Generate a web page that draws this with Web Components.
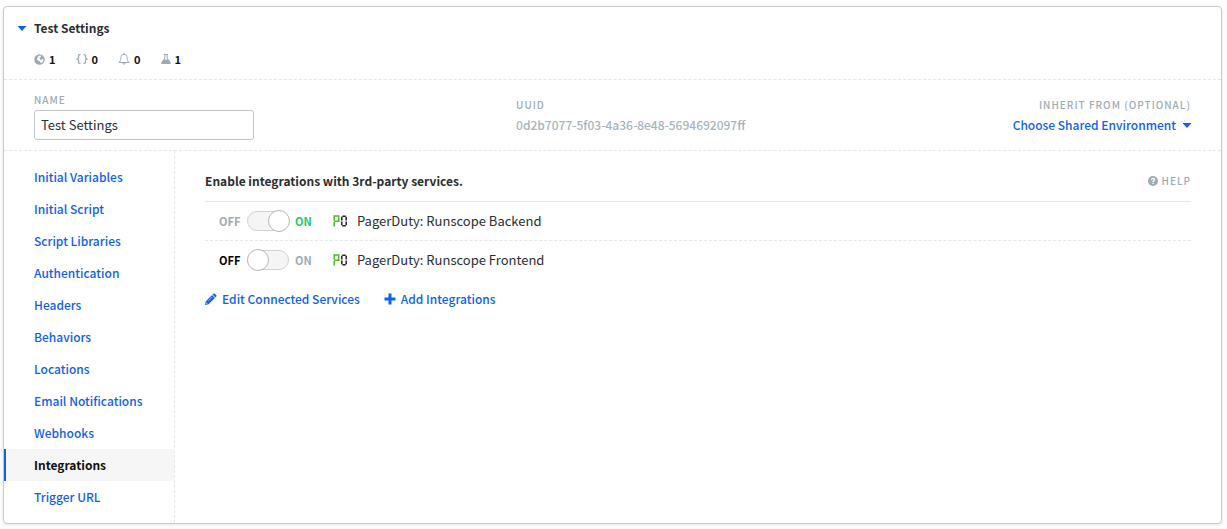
<!DOCTYPE html>
<html lang="en">
<head>
<meta charset="utf-8">
<title>Test Settings</title>
<style>
  body {
    margin: 0;
    padding: 6px 5px 5px 3px;
    background: #fff;
    color: #2b2d2f;
    font: 400 13px/20px "Noto Sans CJK SC", "Noto Sans", sans-serif;
    --blue: #0f62e6;
    --muted: #9dabb4;
    --line: #e4e6e7;
  }
</style>
</head>
<body>
<settings-card>
  <settings-header slot="header" heading="Test Settings">
    <count-badge icon="globe" label="Variables">1</count-badge>
    <count-badge icon="braces" label="Scripts">0</count-badge>
    <count-badge icon="bell" label="Notifications">0</count-badge>
    <count-badge icon="flask" label="Tests">1</count-badge>
  </settings-header>
  <environment-form slot="form" name="Test Settings" uuid="0d2b7077-5f03-4a36-8e48-5694692097ff"></environment-form>
  <side-nav slot="nav">
    <nav-item>Initial Variables</nav-item>
    <nav-item>Initial Script</nav-item>
    <nav-item>Script Libraries</nav-item>
    <nav-item>Authentication</nav-item>
    <nav-item>Headers</nav-item>
    <nav-item>Behaviors</nav-item>
    <nav-item>Locations</nav-item>
    <nav-item>Email Notifications</nav-item>
    <nav-item>Webhooks</nav-item>
    <nav-item current>Integrations</nav-item>
    <nav-item>Trigger URL</nav-item>
  </side-nav>
  <integrations-panel>
    <integration-row on>PagerDuty: Runscope Backend</integration-row>
    <integration-row>PagerDuty: Runscope Frontend</integration-row>
    <action-link slot="actions" icon="pencil">Edit Connected Services</action-link>
    <action-link slot="actions" icon="plus">Add Integrations</action-link>
  </integrations-panel>
</settings-card>

<script>
const ICONS = {
  globe: '<svg width="11" height="11" viewBox="0 0 20 20"><circle cx="10" cy="10" r="9.5" fill="currentColor"/><path fill="#fff" d="M10.500 2.500L13 3L12 5.500L9.500 7.500L11.500 9L14 8L16.500 9.500L17.500 11.500L15.500 15L12.500 17L11.500 14.500L9.500 12.500L7 11.500L5 9.500L6.500 7.500L7 5Z"/><path fill="currentColor" d="M13 4L16 4L18 8.500L15.500 8.500L12.500 11L10.500 10L12 7.500Z"/></svg>',
  braces: '<svg width="12" height="10" viewBox="0 0 12 10" fill="none" stroke="currentColor" stroke-width="1.3"><path d="M4.500 .7H3.500Q2.500 .7 2.500 1.700V3.800Q2.500 5 .5 5Q2.500 5 2.500 6.200V8.300Q2.500 9.300 3.500 9.300H4.500M7.500 .7H8.500Q9.500 .7 9.500 1.700V3.800Q9.500 5 11.500 5Q9.500 5 9.500 6.200V8.300Q9.500 9.300 8.500 9.300H7.500"/></svg>',
  bell: '<svg width="12" height="12" viewBox="0 0 12 12" fill="none" stroke="currentColor"><path d="M6 0V1.300M6 1.300C3.800 1.300 2.900 2.900 2.900 4.600C2.900 7.500 2 8.500 .8 9.500H11.200C10 8.500 9.100 7.500 9.100 4.600C9.100 2.900 8.200 1.300 6 1.300ZM4.800 9.700Q4.800 11.200 6 11.200T7.200 9.700"/></svg>',
  flask: '<svg width="10" height="10" viewBox="0 0 10 10"><path d="M2.800 .5H7.200M3.900 .5V4L.7 8.700Q.4 9.500 1.200 9.500H8.800Q9.600 9.500 9.300 8.700L6.100 4V.5" fill="none" stroke="currentColor"/><path d="M2.800 5.500H7.200L9.500 9V10H.5V9Z" fill="currentColor"/></svg>',
  help: '<svg width="10" height="10" viewBox="0 0 20 20"><circle cx="10" cy="10" r="10" fill="currentColor"/><path d="M6.800 7.500Q7.300 4.600 10.100 4.600Q13.100 4.800 13 7.300Q12.900 8.700 11.300 9.600Q10 10.400 10 12" fill="none" stroke="#fff" stroke-width="2.600"/><path d="M8.700 13.500h2.600v2.700H8.700z" fill="#fff"/></svg>',
  pencil: '<svg width="12" height="12" viewBox="0 0 12 12"><path fill="currentColor" d="M8.400 .7Q9.100 0 9.800 .7L11.300 2.200Q12 2.900 11.300 3.600L10.400 4.500L7.500 1.600ZM7 2.100L9.900 5L3.600 11.300L.3 12L0 11.700L.7 8.400Z"/><path d="M3 8.200L7.200 4M1.300 9.300V10.700H2.700" fill="none" stroke="#fff" stroke-width=".5"/></svg>',
  plus: '<svg width="12" height="12" viewBox="0 0 12 12"><path fill="currentColor" d="M4.500 .5h3v4h4v3h-4v4h-3v-4h-4v-3h4z"/></svg>',
  caret: '<svg width="8" height="5" viewBox="0 0 8 5"><path fill="currentColor" d="M0 0H8V.6L4.500 4.500Q4 5 3.500 4.500L0 .6Z"/></svg>',
  pagerduty: '<svg width="15" height="12" viewBox="0 0 15 12" fill="none" stroke-width="1.5"><path stroke="#4cb82a" d="M1.200 11.500V7M1.200 5.600V1H5.700V6.200H1.200"/><path stroke="#222" d="M8.800 5.400V1.800M8.800 6.600V10.200M9.300 1.200H12.700M9.300 10.800H12.700M13.200 1.800V5.400M13.200 6.600V10.200"/></svg>'
};

/* Registers an element; markup is a function of the host, run when it is connected. */
function define(name, css, markup, setup) {
  customElements.define(name, class extends HTMLElement {
    constructor() {
      super();
      this.attachShadow({ mode: "open" });
    }
    connectedCallback() {
      const template = document.createElement("template");
      template.innerHTML = `<style>*,:host{box-sizing:border-box}${css}</style>${markup(this)}`;
      this.shadowRoot.replaceChildren(template.content.cloneNode(true));
      if (setup) setup(this, this.shadowRoot);
    }
  });
}

define("ui-icon", ":host{display:inline-flex;flex:none} svg{display:block}",
  host => ICONS[host.getAttribute("name")].replace("<svg", '<svg aria-hidden="true"'));

define("settings-card", `
  :host { display: block; border: 1px solid #c5cace; border-radius: 4px; background: #fff; box-shadow: 0 1px 4px rgba(0,0,0,.1); }
  .body { display: grid; grid-template-columns: 171px 1fr; }
`, () => `
  <slot name="header"></slot>
  <slot name="form"></slot>
  <div class="body"><slot name="nav"></slot><slot></slot></div>
`);

define("settings-header", `
  :host { display: block; padding: 11px 14px 10px; border-bottom: 1px dashed var(--line); }
  button { display: flex; align-items: center; gap: 8px; padding: 0; border: 0; background: none; color: inherit; font: inherit; }
  ui-icon { color: var(--blue); }
  h1 { margin: 0; font: inherit; font-size: 12px; font-weight: 700; }
  .counts { display: flex; gap: 20px; padding: 11px 0 0 16px; }
`, () => `
  <h1><button type="button" aria-expanded="true"><ui-icon name="caret"></ui-icon><span></span></button></h1>
  <div class="counts"><slot></slot></div>
`, (host, root) => { root.querySelector("span").textContent = host.getAttribute("heading"); });

define("count-badge", `
  :host { display: inline-flex; align-items: center; gap: 4px; font-size: 11px; font-weight: 700; color: #111; }
  ui-icon { color: var(--muted); }
`, host => `<ui-icon name="${host.getAttribute("icon")}"></ui-icon><slot></slot>`,
  host => { host.title = host.getAttribute("label"); });

define("environment-form", `
  :host { display: grid; grid-template-columns: 5fr 3fr 4fr; padding: 12px 30px 10px; border-bottom: 1px dashed var(--line); }
  .label { display: block; font-size: 10px; line-height: 16px; font-weight: 500; letter-spacing: 1px; color: var(--muted); text-transform: uppercase; }
  input { display: block; width: 220px; height: 30px; margin: 2px 0 0; padding: 0 6px 2px; border: 1px solid #c2c5c7; border-radius: 3px; background: #fff; color: inherit; font: inherit; }
  .field { padding-top: 5px; }
  .value { display: block; font-size: 12px; line-height: 24px; font-weight: 500; color: #a6b4bc; }
  .end { display: flex; flex-direction: column; align-items: flex-end; }
  button { display: flex; align-items: center; gap: 7px; padding: 0; border: 0; background: none; color: var(--blue); font: inherit; font-size: 12px; font-weight: 500; line-height: 24px; }
`, () => `
  <div><label class="label" for="name">Name</label><input id="name" type="text"></div>
  <div class="field"><span class="label">UUID</span><span class="value"></span></div>
  <div class="field end"><span class="label" id="inherit">Inherit from (optional)</span>
    <button type="button" aria-haspopup="listbox" aria-describedby="inherit">Choose Shared Environment<ui-icon name="caret"></ui-icon></button></div>
`, (host, root) => {
  root.querySelector("input").value = host.getAttribute("name");
  root.querySelector(".value").textContent = host.getAttribute("uuid");
});

define("side-nav", `
  :host { display: block; border-right: 1px dashed var(--line); }
  nav { display: flex; flex-direction: column; padding: 10px 0; }
`, () => `<nav aria-label="Settings sections"><slot></slot></nav>`);

define("nav-item", `
  :host { display: block; }
  a { display: block; padding: 6px 0 6px 28px; border-left: 2px solid transparent; color: var(--blue); font-size: 12px; font-weight: 500; text-decoration: none; white-space: nowrap; }
  :host([current]) a { border-color: var(--blue); background: #f6f6f6; color: #111; font-weight: 700; }
`, () => `<a href="#"><slot></slot></a>`, (host, root) => {
  if (host.hasAttribute("current")) root.querySelector("a").setAttribute("aria-current", "page");
});

define("integrations-panel", `
  :host { display: block; padding: 20px 30px; }
  header { display: flex; justify-content: space-between; align-items: center; padding-bottom: 10px; border-bottom: 1px solid var(--line); }
  h2 { margin: 0; font: inherit; font-size: 12px; font-weight: 700; }
  header a { display: flex; align-items: center; gap: 4px; color: var(--muted); font-size: 10px; font-weight: 500; letter-spacing: 1px; text-decoration: none; }
  footer { display: flex; gap: 24px; padding-top: 10px; }
`, () => `
  <header><h2>Enable integrations with 3rd-party services.</h2><a href="#"><ui-icon name="help"></ui-icon>HELP</a></header>
  <slot></slot>
  <footer><slot name="actions"></slot></footer>
`);

define("integration-row", `
  :host { display: flex; align-items: center; height: 39px; padding-left: 14px; border-bottom: 1px dashed var(--line); }
  :host(:last-of-type) { height: 38px; border-bottom: 0; }
  label { display: flex; align-items: center; gap: 6px; color: var(--muted); font-size: 11px; font-weight: 700; }
  .off { width: 22px; }
  .on { width: 18px; }
  label:has(:checked) .on { color: #1dc968; }
  label:not(:has(:checked)) .off { color: #000; }
  input { appearance: none; display: flex; align-items: center; width: 42px; height: 20px; margin: 0; border: 1px solid #d3d3d0; border-radius: 10px; background: #f5f5f5; }
  input::before { content: ""; flex: none; box-sizing: border-box; width: 22px; height: 22px; margin-left: -1px; border: 1px solid #b9b8b3; border-radius: 50%; background: #fff; }
  input:checked::before { margin-left: 20px; }
  ui-icon { margin: 0 9px 0 20px; }
`, () => `
  <label><span class="off">OFF</span><input type="checkbox" role="switch"><span class="on">ON</span></label>
  <ui-icon name="pagerduty"></ui-icon><slot></slot>
`, (host, root) => {
  const input = root.querySelector("input");
  input.checked = host.hasAttribute("on");
  input.setAttribute("aria-label", host.textContent);
});

define("action-link", `
  :host { display: block; }
  a { display: flex; align-items: center; gap: 5px; color: var(--blue); font-size: 12px; font-weight: 500; text-decoration: none; }
`, host => `<a href="#"><ui-icon name="${host.getAttribute("icon")}"></ui-icon><slot></slot></a>`);
</script>
</body>
</html>
